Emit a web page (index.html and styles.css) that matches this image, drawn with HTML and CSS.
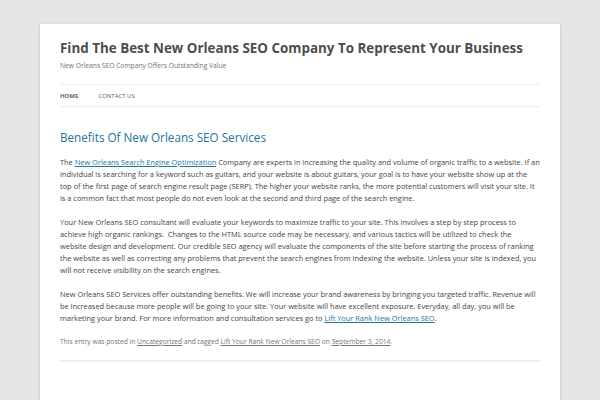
FILE: index.html
```html
<!DOCTYPE html>
<html>
<head>
<meta charset="utf-8">
<link rel="stylesheet" href="styles.css">
</head>
<body>
<div class="site">
  <header class="site-header">
    <h1 class="site-title">Find The Best New Orleans SEO Company To Represent Your Business</h1>
    <p class="site-description">New Orleans SEO Company Offers Outstanding Value</p>
    <nav class="main-nav">
      <a class="nav-item current" href="#">Home</a>
      <a class="nav-item" href="#">Contact Us</a>
    </nav>
  </header>
  <article class="post">
    <h2 class="entry-title">Benefits Of New Orleans SEO Services</h2>
    <div class="entry-content">
      <p>The <a href="#">New Orleans Search Engine Optimization</a> Company are experts in increasing the quality and volume of organic traffic to a website. If an individual is searching for a keyword such as guitars, and your website is about guitars, your goal is to have your website show up at the top of the first page of search engine result page (SERP). The higher your website ranks, the more potential customers will visit your site. It is a common fact that most people do not even look at the second and third page of the search engine.</p>
      <p>Your New Orleans SEO consultant will evaluate your keywords to maximize traffic to your site. This involves a step by step process to achieve high organic rankings.&nbsp; Changes to the HTML source code may be necessary, and various tactics will be utilized to check the website design and development. Our credible SEO agency will evaluate the components of the site before starting the process of ranking the website as well as correcting any problems that prevent the search engines from indexing the website. Unless your site is indexed, you will not receive visibility on the search engines.</p>
      <p>New Orleans SEO Services offer outstanding benefits. We will increase your brand awareness by bringing you targeted traffic. Revenue will be increased because more people will be going to your site. Your website will have excellent exposure. Everyday, all day, you will be marketing your brand. For more information and consultation services go to <a href="#">Lift Your Rank New Orleans SEO</a>.</p>
    </div>
    <footer class="entry-meta">This entry was posted in <a href="#">Uncategorized</a> and tagged <a href="#">Lift Your Rank New Orleans SEO</a> on <a href="#">September 3, 2014</a>.</footer>
  </article>
</div>
</body>
</html>
```

FILE: styles.css
```css
html, body {
  margin: 0;
  padding: 0;
}
body {
  background: #e6e6e6;
  font-family: "Open Sans", "DejaVu Sans", sans-serif;
  color: #444444;
  font-size: 7.415px;
  line-height: 12px;
  height: 400px;
  overflow: hidden;
}
.site {
  margin: 24px 40px 0 40px;
  background: #ffffff;
  padding: 0 20px;
  box-shadow: 0 1px 3px rgba(100, 100, 100, 0.3);
  min-height: 400px;
}
.site-header {
  padding-top: 12px;
}
.site-title {
  margin: 0;
  font-size: 13.4px;
  line-height: 24px;
  font-weight: bold;
  color: #4d4d4d;
}
.site-description {
  margin: 0;
  font-size: 6.7px;
  line-height: 12px;
  color: #757575;
}
.main-nav {
  margin-top: 12px;
  border-top: 1px solid #ededed;
  border-bottom: 1px solid #ededed;
  display: flex;
  gap: 20px;
  height: 21px;
  align-items: center;
}
.nav-item {
  font-size: 6px;
  text-transform: uppercase;
  color: #5e5e5e;
  text-decoration: none;
}
.nav-item.current {
  font-weight: bold;
  color: #636363;
}
.post {
  padding-top: 23px;
  padding-bottom: 12px;
  border-bottom: 2px solid #ededed;
}
.entry-title {
  margin: 0 0 12px 0;
  font-size: 11.7px;
  line-height: 14px;
  font-weight: normal;
  color: #21759b;
}
.entry-content p {
  margin: 0 0 12px 0;
}
a {
  color: #21759b;
}
.entry-meta {
  font-size: 6.7px;
  color: #757575;
}
.entry-meta a {
  color: #757575;
}
```
